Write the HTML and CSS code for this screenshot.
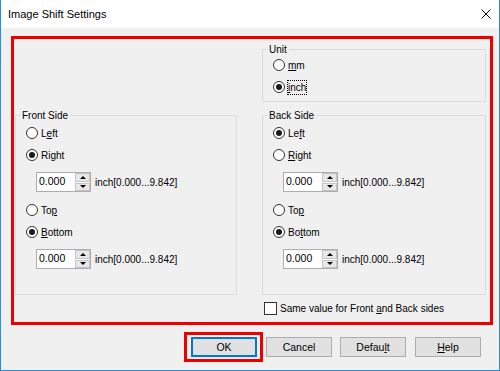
FILE: index.html
```html
<!DOCTYPE html>
<html lang="en">
<head>
    <meta charset="UTF-8">
    <title>Image Shift Settings</title>
    <link rel="stylesheet" href="styles.css">
</head>
<body>
    <div class="window">
        <div class="titlebar">
            <span class="title">Image Shift Settings</span>
            <svg class="close" width="10" height="10" viewBox="0 0 10 10">
                <path d="M0.5 0.5 L9.5 9.5 M9.5 0.5 L0.5 9.5" stroke="#000" stroke-width="1" fill="none"/>
            </svg>
        </div>

        <div class="body">
            <div class="mark">
                <div class="grid">
                    <fieldset class="group unit">
                        <legend>Unit</legend>
                        <div class="opt first"><span class="radio"></span><span class="lbl"><u>m</u>m</span></div>
                        <div class="opt"><span class="radio on"></span><span class="lbl focus"><u>i</u>nch</span></div>
                    </fieldset>

                    <fieldset class="group front">
                        <legend>Front Side</legend>
                        <div class="opt"><span class="radio"></span><span class="lbl">L<u>e</u>ft</span></div>
                        <div class="opt"><span class="radio on"></span><span class="lbl">Ri<u>g</u>ht</span></div>
                        <div class="spin">
                            <div class="spin-field">
                                <span class="spin-val">0.000</span>
                                <span class="spin-btns"><span class="arrow up"></span><span class="arrow down"></span></span>
                            </div>
                            <span class="range">inch[0.000...9.842]</span>
                        </div>
                        <div class="opt"><span class="radio"></span><span class="lbl">To<u>p</u></span></div>
                        <div class="opt"><span class="radio on"></span><span class="lbl"><u>B</u>ottom</span></div>
                        <div class="spin">
                            <div class="spin-field">
                                <span class="spin-val">0.000</span>
                                <span class="spin-btns"><span class="arrow up"></span><span class="arrow down"></span></span>
                            </div>
                            <span class="range">inch[0.000...9.842]</span>
                        </div>
                    </fieldset>

                    <fieldset class="group back">
                        <legend>Back Side</legend>
                        <div class="opt"><span class="radio on"></span><span class="lbl">Le<u>f</u>t</span></div>
                        <div class="opt"><span class="radio"></span><span class="lbl"><u>R</u>ight</span></div>
                        <div class="spin">
                            <div class="spin-field">
                                <span class="spin-val">0.000</span>
                                <span class="spin-btns"><span class="arrow up"></span><span class="arrow down"></span></span>
                            </div>
                            <span class="range">inch[0.000...9.842]</span>
                        </div>
                        <div class="opt"><span class="radio"></span><span class="lbl">To<u>p</u></span></div>
                        <div class="opt"><span class="radio on"></span><span class="lbl">Bo<u>t</u>tom</span></div>
                        <div class="spin">
                            <div class="spin-field">
                                <span class="spin-val">0.000</span>
                                <span class="spin-btns"><span class="arrow up"></span><span class="arrow down"></span></span>
                            </div>
                            <span class="range">inch[0.000...9.842]</span>
                        </div>
                    </fieldset>

                    <div class="check">
                        <span class="box"></span>
                        <span class="lbl">Same value for Front <u>a</u>nd Back sides</span>
                    </div>
                </div>
            </div>

            <div class="buttons">
                <div class="mark-btn"><button class="btn default">OK</button></div>
                <button class="btn cancel">Cancel</button>
                <button class="btn dflt">Defau<u>l</u>t</button>
                <button class="btn help"><u>H</u>elp</button>
            </div>
        </div>
    </div>
</body>
</html>
```

FILE: styles.css
```css
:root {
    --accent: #2b8de0;
    --face: #f0f0f0;
    --groupline: #dcdcdc;
    --mark: #ee0000;
}
* {
    box-sizing: border-box;
}
body {
    margin: 0;
    font-family: "Liberation Sans", Arial, sans-serif;
    font-size: 10px;
    color: #000;
}
.window {
    width: 500px;
    height: 371px;
    border: 1px solid var(--accent);
    border-top: none;
    background: var(--face);
}
.titlebar {
    height: 28px;
    background: #fff;
    display: flex;
    align-items: center;
    padding-left: 7px;
}
.title {
    font-size: 11px;
}
.close {
    margin-left: auto;
    margin-right: 8px;
}
.body {
    padding: 8px 6px 8px 10px;
}
.mark {
    border: 3px solid var(--mark);
}
.grid {
    display: grid;
    grid-template-columns: 222px 224px;
    column-gap: 25px;
    row-gap: 7px;
    padding: 4px 3px 7px 1px;
}
.group {
    margin: 0;
    padding: 0 4px 18px 4px;
    border: 1px solid var(--groupline);
    min-width: 0;
}
.group legend {
    padding: 0 2px;
    line-height: 13px;
}
.unit {
    grid-column: 2;
    grid-row: 1;
    padding-bottom: 3px;
}
.unit .first {
    margin-top: -2px;
}
.front {
    grid-column: 1;
    grid-row: 2;
}
.back {
    grid-column: 2;
    grid-row: 2;
}
.opt {
    display: flex;
    align-items: center;
    height: 22px;
}
.radio {
    width: 12px;
    height: 12px;
    margin-left: 6px;
    border: 1px solid #333;
    border-radius: 50%;
    background: #fff;
    display: flex;
    align-items: center;
    justify-content: center;
}
.radio.on::after {
    content: "";
    width: 6px;
    height: 6px;
    border-radius: 50%;
    background: #1a1a1a;
}
.lbl {
    margin-left: 3px;
    line-height: 13px;
}
.focus {
    outline: 1px dotted #000;
    outline-offset: 0;
}
.spin {
    display: flex;
    align-items: center;
    margin: 6px 0 7px 16px;
}
.spin-field {
    display: flex;
    width: 55px;
    height: 20px;
    border: 1px solid #abadb3;
    background: #fff;
}
.spin-val {
    flex: 1;
    padding-left: 2px;
    line-height: 17px;
    font-size: 10.5px;
}
.spin-btns {
    width: 16px;
    display: flex;
    flex-direction: column;
    gap: 1px;
    padding: 0 0 0 1px;
}
.arrow {
    flex: 1;
    background: #e8e8e8;
    border: 1px solid #c4c4c4;
    display: flex;
    align-items: center;
    justify-content: center;
}
.arrow.up::after {
    content: "";
    border-left: 3px solid transparent;
    border-right: 3px solid transparent;
    border-bottom: 3px solid #000;
}
.arrow.down::after {
    content: "";
    border-left: 3px solid transparent;
    border-right: 3px solid transparent;
    border-top: 3px solid #000;
}
.range {
    margin-left: 4px;
}
.check {
    grid-column: 2;
    grid-row: 3;
    display: flex;
    align-items: center;
    height: 13px;
    margin-left: 2px;
}
.box {
    width: 13px;
    height: 13px;
    border: 1px solid #333;
    background: #fff;
}
.buttons {
    display: flex;
    justify-content: flex-end;
    align-items: center;
    margin-top: 7px;
    margin-right: 12px;
}
.mark-btn {
    display: flex;
    border: 3px solid var(--mark);
    padding: 2px 3px 2px 4px;
}
.btn {
    width: 66px;
    height: 20px;
    padding: 0;
    font-family: inherit;
    font-size: 10.5px;
    color: #000;
    background: #e1e1e1;
    border: 1px solid #adadad;
}
.btn.default {
    border-color: #0078d7;
    box-shadow: inset 0 0 0 1px #0078d7;
}
.cancel {
    margin-left: 3px;
}
.dflt {
    margin-left: 8px;
}
.help {
    margin-left: 9px;
}
```
